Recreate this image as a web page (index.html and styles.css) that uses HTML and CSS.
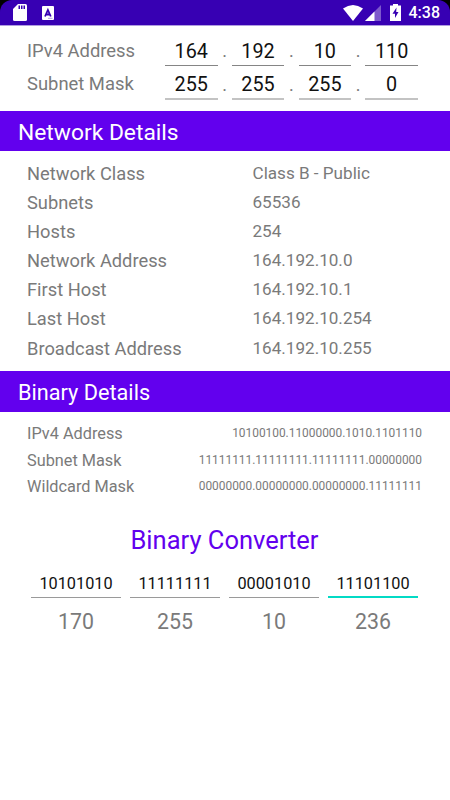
FILE: index.html
```html
<!DOCTYPE html>
<html lang="en">
<head>
    <meta charset="UTF-8">
    <meta name="viewport" content="width=device-width, initial-scale=1.0">
    <title>Subnet Calculator</title>
    <link rel="stylesheet" href="styles.css">
</head>
<body>
    <div class="status-wrap">
        <div class="status-bar">
            <svg class="icon-sd" width="14" height="17" viewBox="0 0 14 17">
                <path d="M5 0H12.500Q14 0 14 1.500V15.500Q14 17 12.500 17H1.500Q0 17 0 15.500V5Z" fill="#fff"/>
                <path d="M5.500 1.500h1.500v3.500h-1.500zM8 1.500h1.500v3.500h-1.500zM10.500 1.500h1.500v3.500h-1.500z" fill="#3700b3"/>
            </svg>
            <svg class="icon-a" width="12" height="14" viewBox="0 0 12 14">
                <rect width="12" height="14" rx="1" fill="#fff"/>
                <path d="M3 10.500L5.900 4L8.800 10.500M4 8.500H7.800" fill="none" stroke="#3700b3" stroke-width="1.800"/>
                <path d="M6 12.300H10.500" stroke="#9b80d9" stroke-width="0.800"/>
            </svg>
            <span class="spacer"></span>
            <svg class="icon-wifi" width="20" height="16" viewBox="0 0 20 16">
                <path d="M0 3.500Q10 -3.500 20 3.500L10 16Z" fill="#fff"/>
            </svg>
            <svg class="icon-signal" width="16" height="16" viewBox="0 0 16 16">
                <path d="M0 16L16 0V16Z" fill="#7d59cc"/>
                <path d="M0 16L9.500 6.500V16Z" fill="#fff"/>
            </svg>
            <svg class="icon-battery" width="11" height="17" viewBox="0 0 11 17">
                <path d="M3 0H8V1.500H11V17H0V1.500H3Z" fill="#fff"/>
                <path d="M6.500 3.500L2.500 9.800H5V14L8.500 8H6.200Z" fill="#3700b3"/>
            </svg>
            <span class="clock">4:38</span>
        </div>
    </div>

    <div class="inputs">
        <div class="input-row">
            <span class="label">IPv4 Address</span>
            <span class="octet">164</span><span class="dot">.</span>
            <span class="octet">192</span><span class="dot">.</span>
            <span class="octet">10</span><span class="dot">.</span>
            <span class="octet">110</span>
        </div>
        <div class="input-row mask-row">
            <span class="label">Subnet Mask</span>
            <span class="octet">255</span><span class="dot">.</span>
            <span class="octet">255</span><span class="dot">.</span>
            <span class="octet">255</span><span class="dot">.</span>
            <span class="octet">0</span>
        </div>
    </div>

    <h2 class="section-title network-title">Network Details</h2>
    <div class="network">
        <span class="name">Network Class</span><span class="value">Class B - Public</span>
        <span class="name">Subnets</span><span class="value">65536</span>
        <span class="name">Hosts</span><span class="value">254</span>
        <span class="name">Network Address</span><span class="value">164.192.10.0</span>
        <span class="name">First Host</span><span class="value">164.192.10.1</span>
        <span class="name">Last Host</span><span class="value">164.192.10.254</span>
        <span class="name">Broadcast Address</span><span class="value">164.192.10.255</span>
    </div>

    <h2 class="section-title binary-title">Binary Details</h2>
    <div class="binary">
        <span class="name">IPv4 Address</span><span class="value">10100100.11000000.1010.1101110</span>
        <span class="name">Subnet Mask</span><span class="value">11111111.11111111.11111111.00000000</span>
        <span class="name">Wildcard Mask</span><span class="value">00000000.00000000.00000000.11111111</span>
    </div>

    <h1 class="converter-title">Binary Converter</h1>
    <div class="converter">
        <span class="bits">10101010</span>
        <span class="bits">11111111</span>
        <span class="bits">00001010</span>
        <span class="bits active">11101100</span>
        <span class="result">170</span>
        <span class="result">255</span>
        <span class="result">10</span>
        <span class="result">236</span>
    </div>
</body>
</html>
```
FILE: styles.css
```css
body {
    margin: 0;
    font-family: Roboto, sans-serif;
    background-color: #fff;
    color: #7a7a7a;
}
.status-wrap {
    background-color: #000;
}
.status-bar {
    display: flex;
    align-items: center;
    box-sizing: border-box;
    height: 26px;
    padding: 0 10px 0 13px;
    background-color: #3700b3;
    border-bottom: 1px solid #b09ce0;
    border-radius: 12px 12px 0 0;
}
.icon-a {
    margin-left: 15px;
}
.spacer {
    flex: 1;
}
.icon-signal {
    margin-left: 2px;
}
.icon-battery {
    margin-left: 9px;
}
.clock {
    margin-left: 8px;
    color: #fff;
    font-size: 16px;
    font-weight: 500;
}
.inputs {
    height: 85px;
    padding-left: 27px;
}
.input-row {
    display: flex;
    height: 40px;
    line-height: 50px;
}
.mask-row {
    height: 34px;
    line-height: 37px;
}
.label {
    width: 138px;
    font-size: 18.400px;
}
.mask-row .label {
    line-height: 35px;
}
.octet {
    box-sizing: border-box;
    width: 52.500px;
    border-bottom: 1px solid #858585;
    color: #111;
    font-size: 19.800px;
    line-height: 52px;
    text-align: center;
}
.mask-row .octet {
    border-bottom: 2px solid #c3c3c3;
    line-height: 37px;
}
.dot {
    width: 14.300px;
    font-size: 18px;
    text-align: center;
}
.section-title {
    box-sizing: border-box;
    height: 40px;
    margin: 0;
    padding-left: 18px;
    background-color: #6200ee;
    color: #fff;
    font-size: 22.800px;
    font-weight: 400;
    line-height: 43px;
}
.network {
    display: grid;
    grid-template-columns: 225.500px 1fr;
    grid-auto-rows: 29.100px;
    height: 212px;
    padding: 8px 0 0 27px;
    line-height: 30px;
}
.network .name {
    font-size: 18.300px;
}
.network .value {
    font-size: 17.100px;
    line-height: 29px;
}
.binary-title {
    height: 41px;
    font-size: 21.700px;
}
.binary {
    display: grid;
    grid-template-columns: 150px 1fr;
    grid-auto-rows: 26.700px;
    padding: 8px 28px 0 27px;
    line-height: 27px;
}
.binary .name {
    font-size: 16.300px;
}
.binary .value {
    font-size: 11.900px;
    text-align: right;
}
.converter-title {
    margin: 20px 0 0;
    padding-right: 1px;
    color: #6200ee;
    font-size: 25.500px;
    font-weight: 400;
    line-height: 40px;
    text-align: center;
}
.converter {
    display: grid;
    grid-template-columns: repeat(4, 90px);
    grid-template-rows: 38px 44px;
    column-gap: 9px;
    padding-left: 31px;
    text-align: center;
}
.bits {
    border-bottom: 1px solid #9a9a9a;
    color: #111;
    font-size: 16.300px;
    line-height: 48px;
}
.bits.active {
    border-bottom: 2px solid #03dac5;
}
.result {
    font-size: 21.300px;
    line-height: 48px;
}
```
